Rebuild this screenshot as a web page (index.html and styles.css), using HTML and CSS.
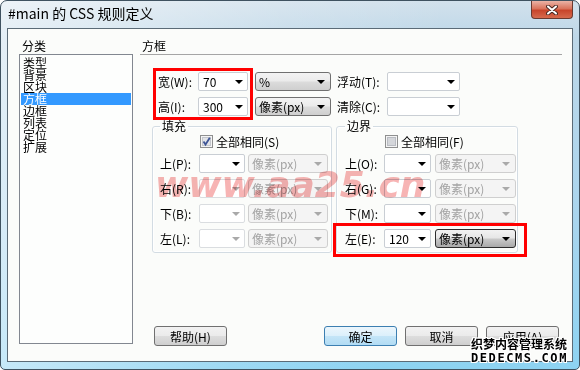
FILE: index.html
```html
<!DOCTYPE html>
<html lang="zh-CN">
<head>
<meta charset="UTF-8">
<title>#main 的 CSS 规则定义</title>
<link rel="stylesheet" href="styles.css">
</head>
<body>

<div class="window">
    <div class="titlebar">
        <span class="title">#main 的 CSS 规则定义</span>
        <span class="close">
            <svg width="12" height="10" viewBox="0 0 12 10">
                <path d="M2 1.5 L10 8.5 M10 1.5 L2 8.5" stroke="#4a2a24" stroke-width="4" stroke-linecap="round"/>
                <path d="M2 1.5 L10 8.5 M10 1.5 L2 8.5" stroke="#fff" stroke-width="2" stroke-linecap="round"/>
            </svg>
        </span>
    </div>

    <div class="client">
        <div class="sidebar">
            <div class="caption">分类</div>
            <ul class="category-list">
                <li>类型</li>
                <li>背景</li>
                <li>区块</li>
                <li class="selected">方框</li>
                <li>边框</li>
                <li>列表</li>
                <li>定位</li>
                <li>扩展</li>
            </ul>
        </div>

        <div class="panel">
            <div class="panel-title">方框</div>

            <div class="size-row">
                <div class="marked size-fields">
                    <label>宽(W):</label>
                    <span class="combo"><span>70</span><i class="arrow"></i></span>
                    <label>高(I):</label>
                    <span class="combo"><span>300</span><i class="arrow"></i></span>
                </div>
                <div class="unit-col">
                    <span class="select"><span>%</span><i class="arrow"></i></span>
                    <span class="select"><span>像素(px)</span><i class="arrow"></i></span>
                </div>
                <div class="float-fields">
                    <label>浮动(T):</label>
                    <span class="combo"><span></span><i class="arrow"></i></span>
                    <label>清除(C):</label>
                    <span class="combo"><span></span><i class="arrow"></i></span>
                </div>
            </div>

            <div class="groups">
                <fieldset class="group padding-group">
                    <legend>填充</legend>
                    <div class="same">
                        <span class="checkbox">
                            <svg width="13" height="13" viewBox="0 0 13 13">
                                <rect x="0.5" y="0.5" width="12" height="12" fill="#f4f4f4" stroke="#8e8f8f"/>
                                <rect x="2.5" y="2.5" width="8" height="8" fill="#e2e4e8" stroke="#c3c6cc"/>
                                <path d="M3.5 6.5 L5.5 9.5 L9.8 2.8" fill="none" stroke="#3e5596" stroke-width="1.8"/>
                            </svg>
                        </span>
                        全部相同(S)
                    </div>
                    <div class="box-fields">
                        <label>上(P):</label>
                        <span class="combo"><span></span><i class="arrow"></i></span>
                        <span class="select off"><span>像素(px)</span><i class="arrow"></i></span>
                        <label>右(R):</label>
                        <span class="combo off"><span></span><i class="arrow"></i></span>
                        <span class="select off"><span>像素(px)</span><i class="arrow"></i></span>
                        <label>下(B):</label>
                        <span class="combo off"><span></span><i class="arrow"></i></span>
                        <span class="select off"><span>像素(px)</span><i class="arrow"></i></span>
                        <label>左(L):</label>
                        <span class="combo off"><span></span><i class="arrow"></i></span>
                        <span class="select off"><span>像素(px)</span><i class="arrow"></i></span>
                    </div>
                </fieldset>

                <fieldset class="group margin-group">
                    <legend>边界</legend>
                    <div class="same">
                        <span class="checkbox">
                            <svg width="13" height="13" viewBox="0 0 13 13">
                                <rect x="0.5" y="0.5" width="12" height="12" fill="#f4f4f4" stroke="#8e8f8f"/>
                                <rect x="2.5" y="2.5" width="8" height="8" fill="#d4d6da" stroke="#b9bcc2"/>
                            </svg>
                        </span>
                        全部相同(F)
                    </div>
                    <div class="box-fields">
                        <label>上(O):</label>
                        <span class="combo"><span></span><i class="arrow"></i></span>
                        <span class="select off"><span>像素(px)</span><i class="arrow"></i></span>
                        <label>右(G):</label>
                        <span class="combo"><span></span><i class="arrow"></i></span>
                        <span class="select off"><span>像素(px)</span><i class="arrow"></i></span>
                        <label>下(M):</label>
                        <span class="combo"><span></span><i class="arrow"></i></span>
                        <span class="select off"><span>像素(px)</span><i class="arrow"></i></span>
                        <label>左(E):</label>
                        <span class="combo"><span>120</span><i class="arrow"></i></span>
                        <span class="select dark"><span>像素(px)</span><i class="arrow"></i></span>
                    </div>
                </fieldset>
            </div>

            <div class="buttons">
                <button class="btn">帮助(H)</button>
                <span class="spacer"></span>
                <button class="btn default">确定</button>
                <button class="btn">取消</button>
                <button class="btn">应用(A)</button>
            </div>
        </div>
    </div>

    <div class="marked left-mark"></div>
    <div class="stamp">www.aa25.cn</div>
    <div class="brand">
        <div class="brand-cn">织梦内容管理系统</div>
        <div class="brand-en">DEDECMS.COM</div>
    </div>
</div>

</body>
</html>
```

FILE: styles.css
```css
* {
    box-sizing: border-box;
}
body {
    margin: 0;
    font-family: "Noto Sans CJK SC", "Noto Sans", sans-serif;
    font-size: 12px;
    color: #000;
    background: #fff;
}
.window {
    position: relative;
    width: 580px;
    height: 370px;
    display: flex;
    flex-direction: column;
    border: 1px solid #3f5260;
    border-radius: 7px 7px 5px 5px;
    overflow: hidden;
    background:
        linear-gradient(100deg, rgba(255,255,255,0.6) 0%, rgba(255,255,255,0.15) 45%, rgba(255,255,255,0) 70%),
        linear-gradient(180deg, #d2e1ec 0%, #bdd7e8 10%, #a9d5ee 60%, #8dd3f2 100%);
}
.titlebar {
    height: 27px;
    flex: none;
    display: flex;
    align-items: flex-start;
    justify-content: space-between;
    padding: 0 6px 0 7px;
}
.title {
    font-size: 14px;
    line-height: 25px;
}
.close {
    width: 42px;
    height: 18px;
    display: flex;
    align-items: center;
    justify-content: center;
    border: 1px solid #6b3a30;
    border-top: none;
    border-radius: 0 0 4px 4px;
    background: linear-gradient(180deg, #eab3a6 0%, #d9735c 45%, #c8452b 55%, #d66a4d 100%);
}

/* client area */
.client {
    flex: 1;
    display: flex;
    margin: 0 6px 7px 6px;
    border: 1px solid #5b6b77;
    background: #fbfcfa;
}
.sidebar {
    margin-left: 11px;
    width: 114px;
}
.caption {
    height: 25px;
    padding: 11px 0 0 3px;
    line-height: 12px;
}
.category-list {
    list-style: none;
    margin: 0;
    height: 290px;
    padding: 1px;
    border: 1px solid #828790;
    background: #fdfefd;
}
.category-list li {
    height: 12px;
    line-height: 12px;
    padding-left: 2px;
}
.category-list li:first-child {
    margin-top: 1px;
}
.category-list .selected {
    background: #3399ff;
    color: #fff;
}

.panel {
    margin-left: 7px;
    width: 422px;
    display: flex;
    flex-direction: column;
}
.panel-title {
    height: 26px;
    padding: 11px 0 0 2px;
    line-height: 12px;
    border-bottom: 1px solid #a5a5a5;
}

/* width / height / float */
.size-row {
    display: flex;
    align-items: flex-start;
    margin-top: 13px;
    height: 52px;
}
.marked {
    border: 3px solid #ff0000;
}
.size-fields {
    margin-left: 13px;
    width: 100px;
    height: 52px;
    padding: 1px 2px 0;
    display: grid;
    grid-template-columns: 40px 50px;
    grid-auto-rows: 19px;
    row-gap: 6px;
}
.unit-col {
    margin-left: 2px;
    width: 76px;
    padding-top: 4px;
    display: flex;
    flex-direction: column;
    gap: 6px;
}
.float-fields {
    margin-left: 6px;
    padding-top: 4px;
    display: grid;
    grid-template-columns: 50px 73px;
    grid-auto-rows: 19px;
    row-gap: 6px;
}
label {
    line-height: 19px;
    white-space: nowrap;
}

/* controls */
.combo, .select {
    display: flex;
    align-items: center;
    justify-content: space-between;
    height: 19px;
    white-space: nowrap;
}
.combo {
    padding: 0 4px;
    border: 1px solid #c9ced4;
    border-radius: 2px;
    background: #fff;
}
.select {
    padding: 0 5px 0 3px;
    border: 1px solid #707070;
    border-radius: 3px;
    background: linear-gradient(180deg, #f3f3f3 0%, #ebebeb 48%, #dcdcdc 52%, #cfcfcf 100%);
}
.arrow {
    width: 0;
    height: 0;
    border-top: 4px solid #000;
    border-left: 4px solid transparent;
    border-right: 4px solid transparent;
}
.combo.off {
    border-color: #dadde0;
}
.combo.off .arrow, .select.off .arrow {
    border-top-color: #a9a9a9;
}
.select.off {
    border-color: #cfcfcf;
    background: #f4f4f4;
    color: #a3a3a3;
}
.select.dark {
    border-color: #2c2c2c;
    background: linear-gradient(180deg, #f2f2f2 0%, #e6e6e6 48%, #c9c9c9 52%, #a9a9a9 100%);
}

/* padding / margin groups */
.groups {
    display: flex;
}
.group {
    height: 133px;
    margin: 0;
    padding: 0 0 3px 7px;
    border: 1px solid #d3dce3;
    border-radius: 3px;
    box-shadow: inset 0 0 0 1px #fff;
    min-inline-size: 0;
}
.padding-group {
    margin-left: 12px;
    width: 180px;
}
.margin-group {
    margin-left: 4px;
    width: 182px;
    padding-left: 8px;
}
legend {
    padding: 0 2px;
    line-height: 12px;
}
.same {
    display: flex;
    align-items: center;
    height: 13px;
    margin-top: 3px;
    padding-left: 40px;
    line-height: 13px;
}
.checkbox {
    display: flex;
    margin-right: 3px;
}
.box-fields {
    margin-top: 6px;
    display: grid;
    grid-auto-rows: 19px;
    row-gap: 6px;
}
.padding-group .box-fields {
    grid-template-columns: 39px 46px 83px;
}
.padding-group .box-fields .select {
    margin-left: 3px;
}
.margin-group .box-fields {
    grid-template-columns: 39px 47px 85px;
}
.margin-group .box-fields .select {
    margin-left: 4px;
}

/* buttons */
.buttons {
    display: flex;
    gap: 8px;
    margin-top: 73px;
    padding-left: 14px;
    padding-right: 3px;
}
.spacer {
    flex: 1;
}
.btn {
    width: 73px;
    height: 20px;
    padding: 0;
    font: inherit;
    color: #000;
    border: 1px solid #707070;
    border-radius: 3px;
    background: linear-gradient(180deg, #f2f2f2 0%, #ebebeb 48%, #dddddd 52%, #cfcfcf 100%);
}
.btn.default {
    border-color: #3c7fb1;
    background: linear-gradient(180deg, #ecf6fc 0%, #dcf0fb 48%, #c4e5f7 52%, #b2dcf4 100%);
}

/* overlays */
.left-mark {
    position: absolute;
    left: 332px;
    top: 222px;
    width: 194px;
    height: 34px;
}
.stamp {
    position: absolute;
    left: 154px;
    top: 166px;
    font-family: "DejaVu Sans", sans-serif;
    font-weight: bold;
    font-style: italic;
    font-size: 36px;
    line-height: 36px;
    color: #f7b4b4;
    mix-blend-mode: multiply;
    pointer-events: none;
}
.brand {
    position: absolute;
    right: 11px;
    bottom: 3px;
    font-weight: bold;
    color: #000;
    text-shadow: 1px 0 #fff, -1px 0 #fff, 0 1px #fff, 0 -1px #fff, 1px 1px #fff, -1px -1px #fff, 1px -1px #fff, -1px 1px #fff;
}
.brand-cn {
    font-size: 12px;
    line-height: 15px;
}
.brand-en {
    font-family: "DejaVu Sans Mono", monospace;
    font-size: 12px;
    line-height: 15px;
    letter-spacing: 1.6px;
}
```
